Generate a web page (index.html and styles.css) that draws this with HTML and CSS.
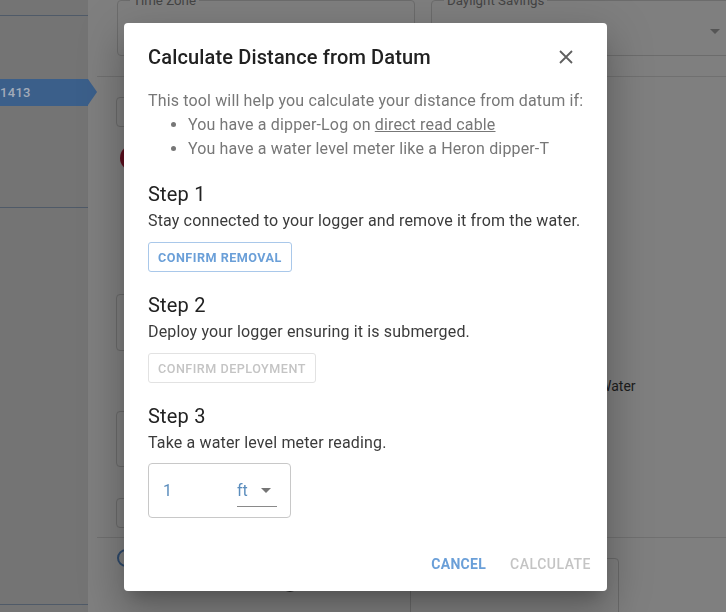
FILE: index.html
```html
<!DOCTYPE html>
<html lang="en">
<head>
<meta charset="utf-8">
<title>Calculate Distance from Datum</title>
<link rel="stylesheet" href="styles.css">
</head>
<body>
<div class="app">
  <aside class="sidebar">
    <div class="side-rule"></div>
    <div class="side-tag"><span class="tag-text">1413</span></div>
    <div class="side-rule side-rule--mid"></div>
    <div class="side-fill"></div>
    <div class="side-rule"></div>
  </aside>
  <main class="main">
    <div class="settings-row">
      <fieldset class="field field--tz">
        <legend>Time Zone</legend>
        <span class="field-value">America/Los_Angeles</span>
        <span class="field-suffix">(PDT -7:00)</span>
      </fieldset>
      <fieldset class="field field--dst">
        <legend>Daylight Savings</legend>
        <span class="field-value">Automatic</span>
        <span class="field-caret"></span>
      </fieldset>
    </div>
    <div class="content">
      <div class="content-grid">
        <div class="col-left">
          <div class="bg-box bg-box--a"></div>
          <div class="bg-dot"></div>
          <div class="bg-box bg-box--b"></div>
          <div class="bg-box bg-box--c"></div>
          <div class="bg-box bg-box--d"></div>
        </div>
        <div class="col-right">
          <span class="water-label">Water</span>
        </div>
      </div>
      <div class="footer-row">
        <span class="radio radio--on"></span>
        <span class="radio radio--off"></span>
        <div class="bg-box bg-box--e"></div>
      </div>
    </div>
  </main>
</div>

<div class="scrim">
  <div class="dialog" role="dialog" aria-labelledby="dlg-title">
    <div class="dialog-title">
      <h2 id="dlg-title">Calculate Distance from Datum</h2>
      <button class="icon-btn" aria-label="Close">
        <svg width="14" height="14" viewBox="0 0 14 14"><path d="M1 1 L13 13 M13 1 L1 13" stroke="#5f5f5f" stroke-width="1.8" fill="none"/></svg>
      </button>
    </div>
    <div class="dialog-body">
      <p class="intro">This tool will help you calculate your distance from datum if:</p>
      <ul class="intro-list">
        <li>You have a dipper-Log on <a href="#" class="link">direct read cable</a></li>
        <li>You have a water level meter like a Heron dipper-T</li>
      </ul>

      <h3 class="step-title">Step 1</h3>
      <p class="step-text">Stay connected to your logger and remove it from the water.</p>
      <button class="outline-btn">CONFIRM REMOVAL</button>

      <h3 class="step-title">Step 2</h3>
      <p class="step-text">Deploy your logger ensuring it is submerged.</p>
      <button class="outline-btn outline-btn--disabled" disabled>CONFIRM DEPLOYMENT</button>

      <h3 class="step-title">Step 3</h3>
      <p class="step-text">Take a water level meter reading.</p>
      <div class="reading">
        <span class="reading-value">1</span>
        <span class="unit-select"><span class="unit-text">ft</span><span class="unit-caret"></span></span>
      </div>
    </div>
    <div class="dialog-actions">
      <button class="text-btn">CANCEL</button>
      <button class="text-btn text-btn--disabled" disabled>CALCULATE</button>
    </div>
  </div>
</div>
</body>
</html>
```

FILE: styles.css
```css
* { box-sizing: border-box; }
html, body { margin: 0; padding: 0; }
body {
  font-family: Roboto, "Noto Sans", "Liberation Sans", sans-serif;
  background: #7f7f7f;
  width: 726px;
  height: 612px;
  overflow: hidden;
}

/* ---------- background page (already dimmed) ---------- */
.app { display: flex; height: 612px; }

.sidebar {
  width: 88px;
  flex: none;
  background: #747474;
  display: flex;
  flex-direction: column;
  padding-top: 15px;
}
.side-rule { height: 1px; background: #4f5a68; flex: none; }
.side-tag {
  margin-top: 63px;
  height: 27px;
  width: 88px;
  background: #3b5f8a;
  position: relative;
  display: flex;
  align-items: center;
}
.side-tag::after {
  content: "";
  position: absolute;
  left: 88px;
  top: 0;
  border-top: 13.5px solid transparent;
  border-bottom: 13.5px solid transparent;
  border-left: 9px solid #3b5f8a;
}
.tag-text {
  margin-left: 0;
  font-size: 13px;
  font-weight: 500;
  color: #a2abb9;
  letter-spacing: 0.3px;
}
.side-rule--mid { margin-top: 101px; }
.side-fill { flex: 1; }
.sidebar > .side-rule:last-child { margin-bottom: 7px; }

.main { flex: 1; display: flex; flex-direction: column; }

.settings-row {
  display: flex;
  gap: 16px;
  padding-left: 29px;
  margin-top: -7px;
}
.field {
  margin: 0;
  height: 63px;
  border: 1px solid #6c6c6c;
  border-radius: 4px;
  padding: 0 12px;
  display: flex;
  align-items: center;
  font-size: 14px;
  color: #2a2a2a;
}
.field legend {
  font-size: 13.3px;
  color: #444;
  padding: 0 3px;
}
.field--tz { width: 298px; justify-content: space-between; }
.field--dst { width: 310px; justify-content: space-between; }
.field-caret {
  width: 0; height: 0;
  margin-right: 8px;
  border-left: 5px solid transparent;
  border-right: 5px solid transparent;
  border-top: 5px solid #555;
}

.content {
  margin-top: 20px;
  margin-left: 9px;
  border-top: 1px solid #707070;
  flex: 1;
  display: flex;
  flex-direction: column;
}
.content-grid { display: flex; padding-left: 19px; }
.col-left { width: 300px; display: flex; flex-direction: column; }
.bg-box { border: 1px solid #6a6a6a; border-radius: 4px; }
.bg-box--a { margin-top: 20px; height: 30px; width: 280px; }
.bg-dot {
  margin-top: 18px;
  margin-left: 4px;
  width: 26px; height: 26px;
  border-radius: 50%;
  background: #5e0f1f;
}
.bg-box--b { margin-top: 123px; height: 57px; width: 280px; }
.bg-box--c { margin-top: 60px; height: 56px; width: 280px; }
.bg-box--d { margin-top: 31px; height: 30px; width: 280px; }
.col-right { padding-left: 183px; padding-top: 299px; }
.water-label { font-size: 14px; color: #1c1c1c; white-space: nowrap; }

.footer-row {
  margin-top: 9px;
  border-top: 1px solid #707070;
  display: flex;
  align-items: flex-start;
  padding-left: 20px;
  flex: 1;
}
.radio {
  width: 18px; height: 18px;
  border-radius: 50%;
  border: 2px solid #2e4a6c;
  flex: none;
}
.radio--on { margin-top: 11px; }
.radio--off { margin-top: 36px; margin-left: 146px; border-color: #2a2a2a; }
.bg-box--e { margin-top: 20px; margin-left: 111px; width: 209px; height: 80px; }

/* ---------- dialog ---------- */
.scrim {
  position: fixed;
  inset: 0;
  display: flex;
  align-items: center;
  justify-content: center;
}
.dialog {
  width: 483px;
  margin-left: 5px;
  margin-top: 2px;
  background: #fff;
  border-radius: 4px;
  box-shadow: 0 11px 15px -7px rgba(0,0,0,.2), 0 24px 38px 3px rgba(0,0,0,.14), 0 9px 46px 8px rgba(0,0,0,.12);
  display: flex;
  flex-direction: column;
}
.dialog-title {
  display: flex;
  align-items: center;
  justify-content: space-between;
  padding: 18px 24px 0 24px;
  height: 50px;
}
.dialog-title h2 {
  margin: 0;
  font-size: 20px;
  font-weight: 500;
  line-height: 32px;
  color: #212121;
  letter-spacing: 0.15px;
}
.icon-btn {
  border: 0;
  background: none;
  padding: 0;
  width: 24px; height: 24px;
  margin-right: 5px;
  display: flex;
  align-items: center;
  justify-content: center;
}

.dialog-body { padding: 16px 16px 0 24px; }
.intro, .step-text {
  margin: 0;
  font-size: 16px;
  line-height: 24px;
  letter-spacing: 0.15px;
  white-space: nowrap;
}
.intro { color: #777; }
.intro-list {
  margin: 0;
  padding-left: 40px;
  color: #777;
  font-size: 16px;
  line-height: 24px;
  letter-spacing: 0.15px;
}
.link { color: #777; text-decoration: underline; }
.step-title {
  margin: 18px 0 0 0;
  font-size: 20px;
  font-weight: 400;
  line-height: 30px;
  color: #222;
  letter-spacing: 0.2px;
}
.step-text { color: #3b3b3b; }
.outline-btn {
  margin-top: 9px;
  height: 30px;
  padding: 0 9px;
  border: 1px solid #a9c8ea;
  border-radius: 3px;
  background: #fff;
  font-family: inherit;
  font-size: 12.6px;
  font-weight: 700;
  letter-spacing: 0.5px;
  color: #6a9fd8;
  display: block;
}
.outline-btn--disabled {
  border-color: #e2e2e2;
  color: #c4c4c4;
  font-weight: 500;
}
.reading {
  margin-top: 8px;
  width: 143px;
  height: 55px;
  border: 1px solid #c8c8c8;
  border-radius: 4px;
  display: flex;
  align-items: center;
  justify-content: space-between;
  padding: 0 13px 0 14px;
  color: #5b8dbd;
  font-size: 16px;
}
.unit-select {
  width: 40px;
  height: 28px;
  margin-top: 4px;
  border-bottom: 1px solid #8a8a8a;
  display: flex;
  align-items: center;
  justify-content: space-between;
  padding-bottom: 3px;
}
.unit-caret {
  width: 0; height: 0;
  margin-right: 6px;
  border-left: 5px solid transparent;
  border-right: 5px solid transparent;
  border-top: 5px solid #757575;
}

.dialog-actions {
  display: flex;
  justify-content: flex-end;
  gap: 8px;
  padding: 28px 8px 9px 8px;
}
.text-btn {
  height: 36px;
  padding: 0 8px;
  border: 0;
  background: none;
  font-family: inherit;
  font-size: 14px;
  font-weight: 700;
  letter-spacing: 0.3px;
  color: #6a9fd8;
}
.text-btn--disabled { color: #c4c4c4; font-weight: 500; letter-spacing: 0.5px; }
```
